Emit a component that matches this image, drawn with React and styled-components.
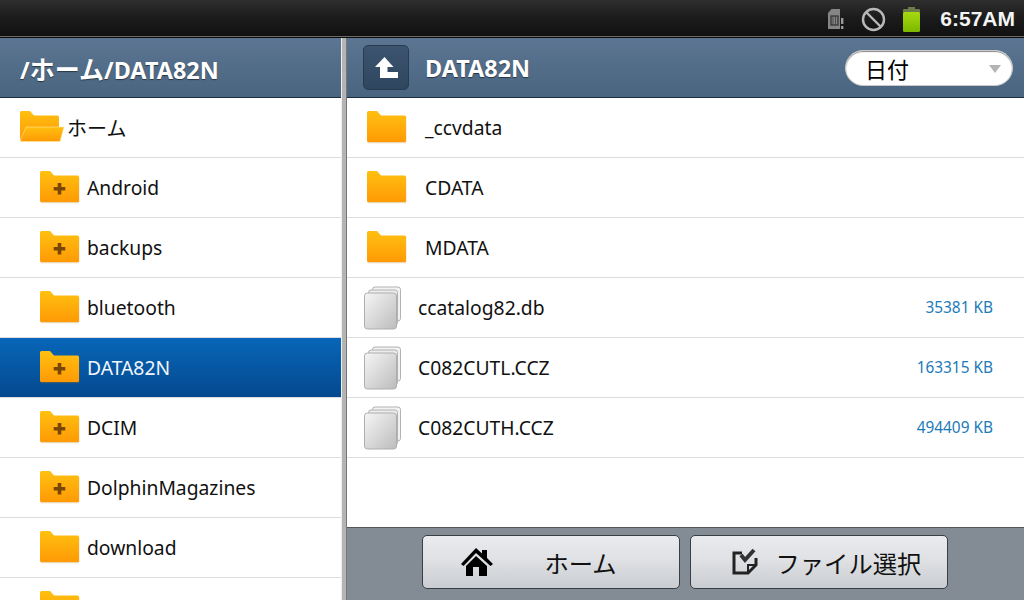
import React from "react";
import styled, { createGlobalStyle } from "styled-components";

const GlobalStyle = createGlobalStyle`
  html, body { margin: 0; padding: 0; background: #fff; }
  body { font-family: "Noto Sans", "Noto Sans CJK JP", sans-serif; }
`;

const Screen = styled.div`
  width: 1024px;
  height: 600px;
  display: flex;
  flex-direction: column;
  overflow: hidden;
`;

const StatusBar = styled.div`
  height: 38px;
  flex: none;
  display: flex;
  align-items: center;
  justify-content: flex-end;
  padding-right: 9px;
  box-sizing: border-box;
  background: linear-gradient(#2f2f2f, #1c1c1c 45%, #111 36px, #6a6a6a 36px, #6a6a6a 37px, #0c0c0c 37px);
`;

const StatusIcon = styled.svg`
  flex: none;
  display: block;
  margin-right: ${p => p.$gap}px;
`;

const Clock = styled.span`
  font-family: "Liberation Sans", sans-serif;
  font-weight: 700;
  font-size: 21px;
  color: #f4f4f4;
`;

const Panes = styled.div`
  flex: 1;
  min-height: 0;
  display: flex;
`;

const LeftPane = styled.div`
  width: 341px;
  flex: none;
  display: flex;
  flex-direction: column;
  overflow: hidden;
`;

const Divider = styled.div`
  width: 4px;
  flex: none;
  background: #b4b4b4;
  border-left: 1px solid #eee;
  border-right: 1px solid #777;
`;

const RightPane = styled.div`
  flex: 1;
  min-width: 0;
  display: flex;
  flex-direction: column;
`;

const Header = styled.div`
  height: 60px;
  flex: none;
  display: flex;
  align-items: center;
  padding-left: ${p => p.$pad}px;
  background: linear-gradient(#5b7592, #4a6580);
  border-bottom: 1px solid #1f2f40;
  box-sizing: border-box;
`;

const HeaderTitle = styled.span`
  font-weight: 700;
  font-size: 23.4px;
  color: #fff;
  margin-left: ${p => p.$left || 0}px;
  text-shadow: 0 1px 1px rgba(0, 0, 0, 0.5);
  white-space: nowrap;
`;

const Kana = styled.span`
  font-size: 25px;
`;

const UpButton = styled.div`
  width: 46px;
  height: 45px;
  flex: none;
  display: flex;
  align-items: center;
  justify-content: center;
  margin-bottom: 1px;
  border-radius: 5px;
  box-sizing: border-box;
  border: 1px solid #2a3b4e;
  background: linear-gradient(#3c5470, #2f465f);
`;

const SortSelect = styled.div`
  margin-left: auto;
  margin-right: 11px;
  width: 168px;
  height: 36px;
  box-sizing: border-box;
  display: flex;
  align-items: center;
  justify-content: space-between;
  padding: 0 11px 0 19px;
  background: #fff;
  border-radius: 18px;
  border: 1px solid #c8c8c8;
  box-shadow: inset 0 1px 1px #8a8a8a;
  font-size: 22px;
  color: #000;
`;

const SortArrow = styled.span`
  width: 0;
  height: 0;
  border-left: 6px solid transparent;
  border-right: 6px solid transparent;
  border-top: 8px solid #b4b4b4;
  margin-top: 2px;
`;

const Row = styled.div`
  height: 60px;
  flex: none;
  box-sizing: border-box;
  display: flex;
  align-items: center;
  padding-left: ${p => p.$indent}px;
  padding-right: 31px;
  font-size: 19.3px;
  color: ${p => (p.$selected ? "#f2f6fb" : "#111")};
  background: ${p => (p.$selected ? "linear-gradient(#0866b8, #04498f)" : "#fff")};
  border-bottom: 1px solid #dcdce0;
  white-space: nowrap;
`;

const RowName = styled.span`
  margin-left: ${p => p.$gap}px;
  font-size: ${p => p.$size || 19.3}px;
`;

const FileSize = styled.span`
  margin-left: auto;
  font-size: 15.4px;
  color: #1c7ab8;
`;

const List = styled.div`
  flex: 1;
  min-height: 0;
  overflow: hidden;
  background: #fff;
`;

const Footer = styled.div`
  height: 73px;
  flex: none;
  box-sizing: border-box;
  display: flex;
  justify-content: center;
  gap: 10px;
  padding: 7px 2px 0 0;
  background: #838c94;
  border-top: 1px solid #555;
`;

const FootButton = styled.div`
  width: 258px;
  height: 54px;
  box-sizing: border-box;
  display: flex;
  align-items: center;
  padding-left: ${p => p.$pad}px;
  border-radius: 5px;
  border: 1px solid #3a3f44;
  background: linear-gradient(#e9ebef, #dfe1e4 45%, #c9ccd1);
  font-size: 24.3px;
  color: #111;
  white-space: nowrap;
`;

const FootLabel = styled.span`
  margin-left: ${p => p.$gap}px;
`;

const FolderGradient = () => (
  <svg width="0" height="0" style={{ position: "absolute" }}>
    <defs>
      <linearGradient id="folderFill" x1="0" y1="0" x2="0" y2="1">
        <stop offset="0" stopColor="#ffc010" />
        <stop offset="1" stopColor="#ff9a06" />
      </linearGradient>
      <linearGradient id="fileFace" x1="0" y1="0" x2="1" y2="1">
        <stop offset="0" stopColor="#f6f6f6" />
        <stop offset="1" stopColor="#bcbcbc" />
      </linearGradient>
      <linearGradient id="batteryFill" x1="0" y1="0" x2="0" y2="1">
        <stop offset="0" stopColor="#a6da10" />
        <stop offset="1" stopColor="#7db800" />
      </linearGradient>
    </defs>
  </svg>
);

const FolderIcon = ({ plus }) => (
  <svg width="40" height="33" viewBox="0 0 40 33" style={{ flex: "none", display: "block" }}>
    <path d="M0 1.5Q0 0 1.5 0H10L14 4.5H37.5Q39 4.5 39 6V30Q39 31.5 37.5 31.5H1.5Q0 31.5 0 30Z" fill="#c77c0a" opacity="0.3" transform="translate(0.4 0.8)" />
    <path d="M0 1.5Q0 0 1.5 0H10L14 4.5H37.5Q39 4.5 39 6V30Q39 31 37.5 31H1.5Q0 31 0 29.5Z" fill="url(#folderFill)" />
    {plus && <path d="M17.7 12H21.3V16H25.3V19.5H21.3V23.5H17.7V19.5H13.7V16H17.7Z" fill="#7a4606" />}
  </svg>
);

const OpenFolderIcon = () => (
  <svg width="46" height="33" viewBox="0 0 46 33" style={{ flex: "none", display: "block" }}>
    <path d="M0 1.5Q0 0 1.5 0H10L14 4.5H37.5Q39 4.5 39 6V28H0Z" fill="url(#folderFill)" />
    <path d="M6 16H44L40 30.5H1.5Q0 30.5 0.4 29Z" fill="url(#folderFill)" stroke="#ffe59a" strokeWidth="0.6" />
  </svg>
);

const FileIcon = () => (
  <svg width="40" height="44" viewBox="0 0 40 44" style={{ flex: "none", display: "block" }}>
    <rect x="9.5" y="1" width="28" height="34" rx="2.5" fill="#f2f2f2" stroke="#b2b2b2" />
    <rect x="5.5" y="4" width="29" height="35" rx="2.5" fill="#ececec" stroke="#b2b2b2" />
    <rect x="1.5" y="7" width="32" height="36" rx="3" fill="url(#fileFace)" stroke="#aeaeae" />
  </svg>
);

const leftRows = [
  { name: "Android", plus: true },
  { name: "backups", plus: true },
  { name: "bluetooth" },
  { name: "DATA82N", plus: true, selected: true },
  { name: "DCIM", plus: true },
  { name: "DolphinMagazines", plus: true },
  { name: "download" },
  { name: "" }
];

const files = [
  { name: "ccatalog82.db", size: "35381 KB" },
  { name: "C082CUTL.CCZ", size: "163315 KB" },
  { name: "C082CUTH.CCZ", size: "494409 KB" }
];

export default function App() {
  return (
    <Screen>
      <GlobalStyle />
      <FolderGradient />
      <StatusBar>
        <StatusIcon $gap={17} width="17" height="20" viewBox="0 0 17 20">
          <path d="M4.5 0H13V20H1V4Z" fill="#858585" />
          <rect x="4" y="7" width="7" height="9" fill="none" stroke="#3a3a3a" strokeWidth="1.4" />
          <path d="M6 7V16M8.5 7V16" stroke="#3a3a3a" strokeWidth="0.8" />
          <rect x="14" y="9" width="2.4" height="6" fill="#999" />
          <rect x="14" y="17" width="2.4" height="3" fill="#999" />
        </StatusIcon>
        <StatusIcon $gap={16} width="25" height="25" viewBox="0 0 25 25">
          <circle cx="12.5" cy="12.5" r="10.5" fill="none" stroke="#b8b8b8" strokeWidth="2.4" />
          <path d="M5 5L20 20" stroke="#b8b8b8" strokeWidth="2.4" />
        </StatusIcon>
        <StatusIcon $gap={19} width="19" height="25" viewBox="0 0 19 25">
          <path d="M6 0H13V2H17Q18 2 18 3V6H1V3Q1 2 2 2H6Z" fill="#6d7a4a" />
          <rect x="1" y="5" width="17" height="20" rx="1.5" fill="url(#batteryFill)" />
        </StatusIcon>
        <Clock>6:57AM</Clock>
      </StatusBar>
      <Panes>
        <LeftPane>
          <Header $pad={20}>
            <HeaderTitle>/<Kana>ホーム</Kana>/DATA82N</HeaderTitle>
          </Header>
          <List>
            <Row $indent={20}>
              <OpenFolderIcon />
              <RowName $gap={1} $size={20}>ホーム</RowName>
            </Row>
            {leftRows.map((r, i) => (
              <Row key={i} $indent={40} $selected={r.selected}>
                <FolderIcon plus={r.plus} />
                <RowName $gap={7}>{r.name}</RowName>
              </Row>
            ))}
          </List>
        </LeftPane>
        <Divider />
        <RightPane>
          <Header $pad={16}>
            <UpButton>
              <svg width="23" height="21" viewBox="0 0 23 21">
                <path d="M9.5 0L18.5 10H12.5V15H23V21H5V10H0Z" fill="#fff" />
              </svg>
            </UpButton>
            <HeaderTitle $left={16}>DATA82N</HeaderTitle>
            <SortSelect>
              日付
              <SortArrow />
            </SortSelect>
          </Header>
          <List>
            {["_ccvdata", "CDATA", "MDATA"].map(name => (
              <Row key={name} $indent={20}>
                <FolderIcon />
                <RowName $gap={18}>{name}</RowName>
              </Row>
            ))}
            {files.map(f => (
              <Row key={f.name} $indent={16}>
                <FileIcon />
                <RowName $gap={15}>{f.name}</RowName>
                <FileSize>{f.size}</FileSize>
              </Row>
            ))}
          </List>
          <Footer>
            <FootButton $pad={38}>
              <svg width="32" height="28" viewBox="0 0 32 28" style={{ flex: "none" }}>
                <path d="M15 0L21 5.5V2H26V10L32 16L29.5 18L15 5L2.5 18L0 16Z" fill="#000" />
                <path d="M15 8L26 18V28H18V19H12V28H5V18Z" fill="#000" />
              </svg>
              <FootLabel $gap={52}>ホーム</FootLabel>
            </FootButton>
            <FootButton $pad={41}>
              <svg width="26" height="28" viewBox="0 0 26 28" style={{ flex: "none" }}>
                <path d="M10 5H2V25H16L24 17V10" fill="none" stroke="#222" strokeWidth="3" />
                <path d="M16 24V17H24" fill="none" stroke="#222" strokeWidth="2" />
                <path d="M9 7L13 12L22 2" fill="none" stroke="#333" strokeWidth="4" />
              </svg>
              <FootLabel $gap={18}>ファイル選択</FootLabel>
            </FootButton>
          </Footer>
        </RightPane>
      </Panes>
    </Screen>
  );
}
